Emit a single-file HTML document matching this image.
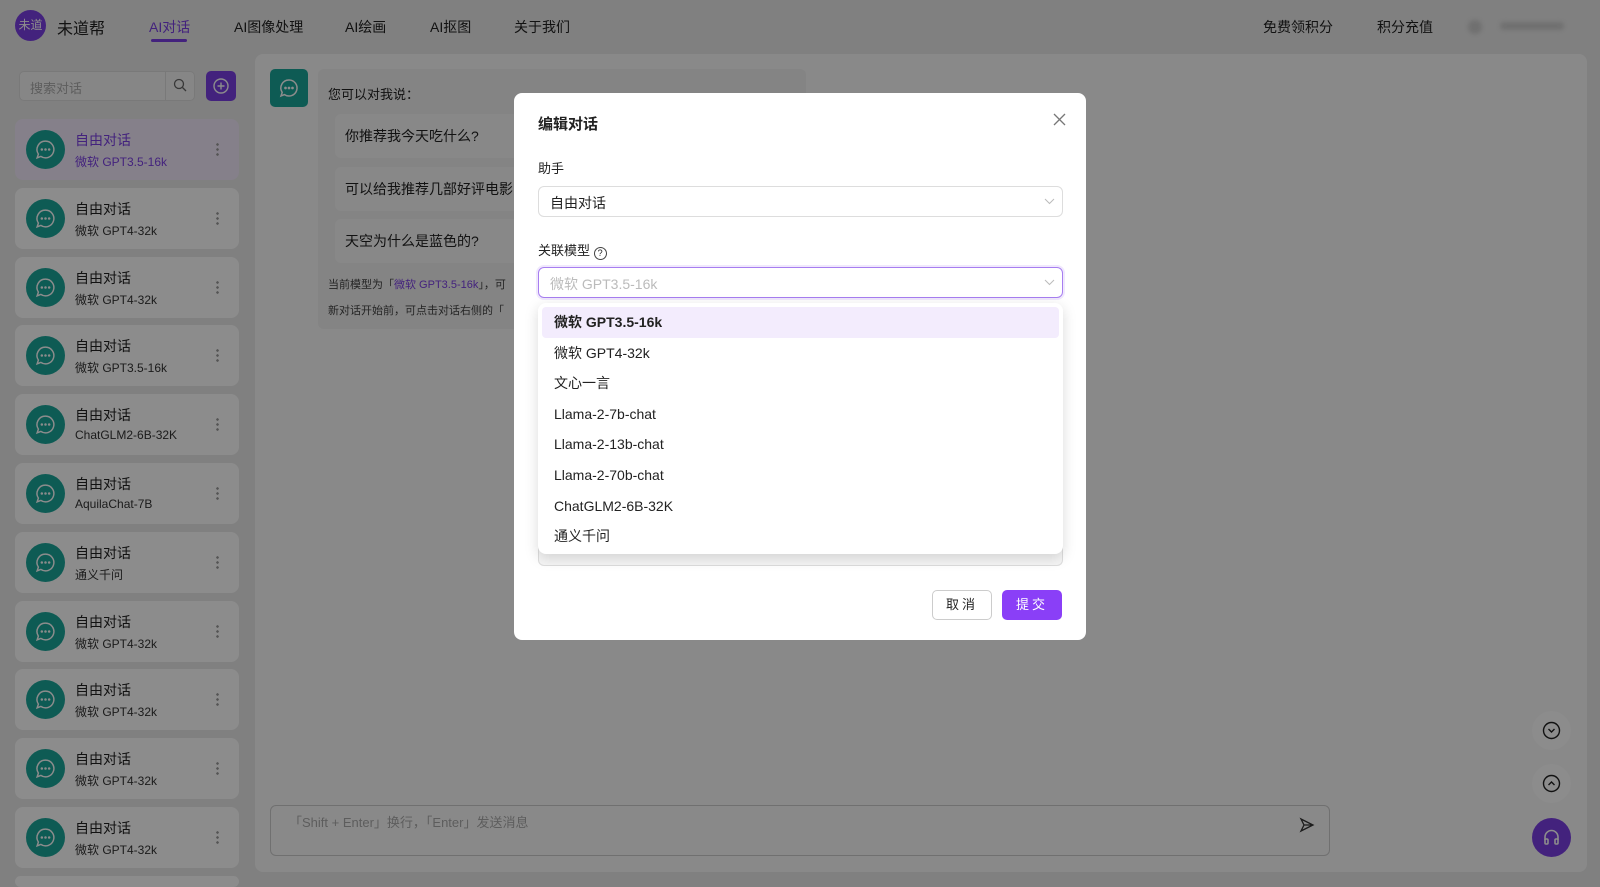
<!DOCTYPE html>
<html style="overflow:hidden;width:1600px;height:887px"><head><meta charset="utf-8"><style>
*{box-sizing:border-box;margin:0;padding:0}
body{width:1600px;height:887px;overflow:hidden;position:relative;background:#e9e9e9;font-family:"Liberation Sans","Noto Sans CJK SC",sans-serif;color:#222;font-size:14px}
.abs{position:absolute}
.nav{font-size:14px;color:#222;top:17px}
.item{position:absolute;left:15px;width:224px;height:61px;background:#fff;border-radius:8px;overflow:hidden}
.item.act{background:#f3eafc}
.av{position:absolute;left:11px;top:11px;width:39px;height:39px;border-radius:50%;background:#1aa69a}
.item .t{position:absolute;left:60px;top:11px;font-size:14px}
.item .s{position:absolute;left:60px;top:34px;font-size:12px;color:#333}
.item .d{position:absolute;right:20px;top:23px;width:3px;height:14px;background:radial-gradient(circle,#999 1.2px,transparent 1.4px) 0 0/3px 5px}
.chip{position:absolute;left:335px;height:44px;background:#f7f7f7;border-radius:6px;padding:12px 10px;font-size:14px;width:470px}
.ov{position:absolute;left:0;top:0;width:1600px;height:887px;background:rgba(0,0,0,.45)}
.dlg{position:absolute;left:514px;top:93px;width:572px;height:547px;background:#fff;border-radius:8px}
.sel{position:absolute;left:24px;width:525px;height:31px;border:1px solid #ddd;border-radius:6px;padding:6px 11px;font-size:14px}
.dd{position:absolute;left:24px;top:210px;width:525px;height:251px;background:#fff;border-radius:8px;box-shadow:0 4px 14px rgba(0,0,0,.15);padding:4px}
.dd div{height:30.6px;line-height:30.6px;padding-left:12px;font-size:14px;border-radius:4px}
.fb{position:absolute;left:1532px;width:39px;height:39px;border-radius:50%;background:#fff}
</style></head><body>
<div class="abs" style="left:15px;top:10px;width:31px;height:31px;border-radius:50%;background:#7b3fe4;color:#fff;font-size:12px;line-height:31px;text-align:center">未道</div>
<div class="abs" style="left:57px;top:15px;font-size:16px">未道帮</div>
<div class="abs nav" style="left:149px;color:#7b3fe4">AI对话</div>
<div class="abs" style="left:151px;top:39px;width:36px;height:3px;border-radius:2px;background:#7b3fe4"></div>
<div class="abs nav" style="left:234px">AI图像处理</div>
<div class="abs nav" style="left:345px">AI绘画</div>
<div class="abs nav" style="left:430px">AI抠图</div>
<div class="abs nav" style="left:514px">关于我们</div>
<div class="abs nav" style="left:1263px">免费领积分</div>
<div class="abs nav" style="left:1377px">积分充值</div>
<div class="abs" style="left:1468px;top:20px;width:14px;height:14px;border-radius:50%;background:#ccc;filter:blur(2px)"></div>
<div class="abs" style="left:1500px;top:22px;width:64px;height:8px;border-radius:4px;background:#ccc;filter:blur(2px)"></div>
<div class="abs" style="left:19px;top:71px;width:176px;height:30px;border:1px solid #ddd;border-radius:5px;background:#f5f5f5;color:#aaa;padding:6px 10px;font-size:13px">搜索对话</div>
<div class="abs" style="left:165px;top:72px;width:1px;height:28px;background:#ddd"></div>
<svg class="abs" style="left:173px;top:78px" width="14" height="14" viewBox="0 0 14 14" fill="none" stroke="#666" stroke-width="1.3"><circle cx="6" cy="6" r="4.5"/><path d="M9.5 9.5L13 13"/></svg>
<div class="abs" style="left:206px;top:71px;width:30px;height:30px;border-radius:5px;background:#7b3fe4"></div>
<svg class="abs" style="left:212px;top:77px" width="18" height="18" viewBox="0 0 18 18" fill="none" stroke="#fff" stroke-width="1.4"><circle cx="9" cy="9" r="7"/><path d="M9 5.5v7M5.5 9h7"/></svg>
<div id="items"></div>
<div class="abs" style="left:255px;top:54px;width:1332px;height:818px;background:#f9f9f9;border-radius:8px"></div>
<div class="abs" style="left:270px;top:69px;width:38px;height:38px;border-radius:5px;background:#1aa69a"></div>
<svg class="abs" style="left:278px;top:77px" width="22" height="22" viewBox="0 0 22 22" fill="none" stroke="#fff" stroke-width="1.5"><path d="M11 3a8 8 0 1 1-4.5 14.6L3 19l1.2-3.6A8 8 0 0 1 11 3z"/><circle cx="7.5" cy="11" r=".6" fill="#fff"/><circle cx="11" cy="11" r=".6" fill="#fff"/><circle cx="14.5" cy="11" r=".6" fill="#fff"/></svg>
<div class="abs" style="left:318px;top:69px;width:488px;height:260px;background:#f0f0f0;border-radius:6px"></div>
<div class="abs" style="left:328px;top:84px;font-size:13px">您可以对我说：</div>
<div class="chip" style="top:114px">你推荐我今天吃什么?</div>
<div class="chip" style="top:167px">可以给我推荐几部好评电影吗</div>
<div class="chip" style="top:219px">天空为什么是蓝色的?</div>
<div class="abs" style="left:328px;top:276px;font-size:11px;color:#444">当前模型为「<span style="color:#7b3fe4">微软 GPT3.5-16k</span>」，可</div>
<div class="abs" style="left:328px;top:302px;font-size:11px;color:#444">新对话开始前，可点击对话右侧的「</div>
<div class="abs" style="left:270px;top:805px;width:1060px;height:51px;border:1px solid #ccc;border-radius:6px;background:#fafafa;color:#aaa;padding:6px 18px;font-size:13px">「Shift + Enter」换行，「Enter」发送消息</div>
<svg class="abs" style="left:1299px;top:817px" width="16" height="16" viewBox="0 0 16 16" fill="none" stroke="#333" stroke-width="1.3"><path d="M2 2l12 6-12 6 3-6z M5 8h9"/></svg>
<div class="fb" style="top:711px"></div><div class="fb" style="top:764px"></div><div class="fb" style="top:818px;background:#7b3fe4"></div>
<svg class="abs" style="left:1542px;top:721px" width="19" height="19" viewBox="0 0 19 19" fill="none" stroke="#222" stroke-width="1.4"><circle cx="9.5" cy="9.5" r="8"/><path d="M6.5 8l3 3 3-3"/></svg>
<svg class="abs" style="left:1542px;top:774px" width="19" height="19" viewBox="0 0 19 19" fill="none" stroke="#222" stroke-width="1.4"><circle cx="9.5" cy="9.5" r="8"/><path d="M6.5 11l3-3 3 3"/></svg>
<svg class="abs" style="left:1541px;top:827px" width="21" height="21" viewBox="0 0 21 21" fill="none" stroke="#fff" stroke-width="1.6"><path d="M4 13v-3a6.5 6.5 0 0 1 13 0v3"/><rect x="4" y="12" width="3" height="5" rx="1"/><rect x="14" y="12" width="3" height="5" rx="1"/></svg>
<div class="ov"></div>
<div class="dlg">
<div class="abs" style="left:24px;top:20px;font-size:15px;font-weight:bold">编辑对话</div>
<svg class="abs" style="left:539px;top:20px" width="13" height="13" viewBox="0 0 13 13" stroke="#777" stroke-width="1.3"><path d="M1 1l11 11M12 1L1 12"/></svg>
<div class="abs" style="left:24px;top:65px;font-size:13px">助手</div>
<div class="sel" style="top:93px">自由对话</div>
<div class="abs" style="left:24px;top:147px;font-size:13px">关联模型 <span style="display:inline-block;width:13px;height:13px;border:1px solid #444;border-radius:50%;font-size:9px;line-height:11px;text-align:center;vertical-align:-1px">?</span></div>
<div class="sel" style="top:174px;border-color:#a77ef0;color:#bbb;box-shadow:0 0 0 2px #f0e8fd">微软 GPT3.5-16k</div>
<svg class="abs" style="left:530px;top:105px" width="11" height="7" viewBox="0 0 11 7" fill="none" stroke="#bbb"><path d="M1 1l4.5 4.5L10 1"/></svg>
<svg class="abs" style="left:530px;top:186px" width="11" height="7" viewBox="0 0 11 7" fill="none" stroke="#bbb"><path d="M1 1l4.5 4.5L10 1"/></svg>
<div class="abs" style="left:24px;top:440px;width:525px;height:33px;border:1px solid #ddd;border-top:none;border-radius:0 0 6px 6px;background:#f5f5f5"></div>
<div class="dd">
<div style="background:#f3ecfd;font-weight:bold">微软 GPT3.5-16k</div>
<div>微软 GPT4-32k</div><div>文心一言</div><div>Llama-2-7b-chat</div><div>Llama-2-13b-chat</div><div>Llama-2-70b-chat</div><div>ChatGLM2-6B-32K</div><div>通义千问</div>
</div>
<div class="abs" style="left:418px;top:497px;width:60px;height:30px;border:1px solid #ccc;border-radius:5px;text-align:center;line-height:28px;font-size:13px;letter-spacing:3px">取消</div>
<div class="abs" style="left:488px;top:497px;width:60px;height:30px;background:#8a3ff7;border-radius:5px;text-align:center;line-height:30px;font-size:13px;color:#fff;letter-spacing:3px">提交</div>
</div>
<script>
var d=[["自由对话","微软 GPT3.5-16k"],["自由对话","微软 GPT4-32k"],["自由对话","微软 GPT4-32k"],["自由对话","微软 GPT3.5-16k"],["自由对话","ChatGLM2-6B-32K"],["自由对话","AquilaChat-7B"],["自由对话","通义千问"],["自由对话","微软 GPT4-32k"],["自由对话","微软 GPT4-32k"],["自由对话","微软 GPT4-32k"],["自由对话","微软 GPT4-32k"],["",""]];
var h="";var ic='<svg style="position:absolute;left:19px;top:19px" width="23" height="23" viewBox="0 0 22 22" fill="none" stroke="#fff" stroke-width="1.4"><path d="M11 3a8 8 0 1 1-4.5 14.6L3 19l1.2-3.6A8 8 0 0 1 11 3z"/><circle cx="7.5" cy="11" r=".5" fill="#fff"/><circle cx="11" cy="11" r=".5" fill="#fff"/><circle cx="14.5" cy="11" r=".5" fill="#fff"/></svg>';
d.forEach(function(x,i){var a=i==0;var top=119+i*68.8;var st='top:'+top+'px'+(i==11?';height:'+(887-top)+'px':'');h+='<div class="item'+(a?' act':'')+'" style="'+st+'"><div class="av"></div>'+ic+'<div class="t"'+(a?' style="color:#7b3fe4"':'')+'>'+x[0]+'</div><div class="s"'+(a?' style="color:#7b3fe4"':'')+'>'+x[1]+'</div><div class="d"></div></div>';});
document.getElementById("items").innerHTML=h;
</script>
</body></html>
